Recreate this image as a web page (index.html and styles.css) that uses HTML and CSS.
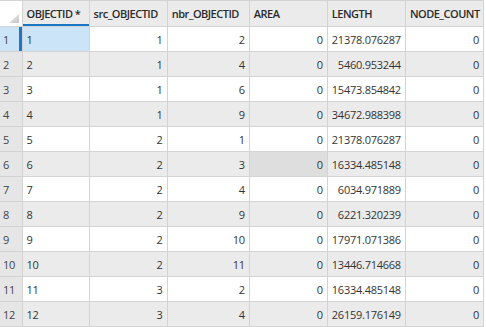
FILE: index.html
```html
<!DOCTYPE html>
<html>
<head>
<meta charset="utf-8">
<link rel="stylesheet" href="styles.css">
</head>
<body>
<table class="grid">
  <colgroup>
    <col class="c0"><col class="c1"><col class="c2"><col class="c3"><col class="c4"><col class="c5"><col class="c6">
  </colgroup>
  <thead>
    <tr>
      <th class="corner"><svg width="21" height="25" viewBox="0 0 21 25"><defs><linearGradient id="g" x1="0" y1="0" x2="1" y2="1"><stop offset="0" stop-color="#f2f2f2"/><stop offset="1" stop-color="#c4c4c4"/></linearGradient></defs><polygon points="19,13 19,22 9,22" fill="url(#g)"/></svg></th>
      <th class="sorted">OBJECTID *</th>
      <th>src_OBJECTID</th>
      <th>nbr_OBJECTID</th>
      <th>AREA</th>
      <th>LENGTH</th>
      <th>NODE_COUNT</th>
    </tr>
  </thead>
  <tbody>
    <tr class="sel"><td class="rh">1</td><td class="id">1</td><td>1</td><td>2</td><td>0</td><td>21378.076287</td><td>0</td></tr>
    <tr><td class="rh">2</td><td class="id">2</td><td>1</td><td>4</td><td>0</td><td>5460.953244</td><td>0</td></tr>
    <tr><td class="rh">3</td><td class="id">3</td><td>1</td><td>6</td><td>0</td><td>15473.854842</td><td>0</td></tr>
    <tr><td class="rh">4</td><td class="id">4</td><td>1</td><td>9</td><td>0</td><td>34672.988398</td><td>0</td></tr>
    <tr><td class="rh">5</td><td class="id">5</td><td>2</td><td>1</td><td>0</td><td>21378.076287</td><td>0</td></tr>
    <tr><td class="rh">6</td><td class="id">6</td><td>2</td><td>3</td><td class="hover">0</td><td>16334.485148</td><td>0</td></tr>
    <tr><td class="rh">7</td><td class="id">7</td><td>2</td><td>4</td><td>0</td><td>6034.971889</td><td>0</td></tr>
    <tr><td class="rh">8</td><td class="id">8</td><td>2</td><td>9</td><td>0</td><td>6221.320239</td><td>0</td></tr>
    <tr><td class="rh">9</td><td class="id">9</td><td>2</td><td>10</td><td>0</td><td>17971.071386</td><td>0</td></tr>
    <tr><td class="rh">10</td><td class="id">10</td><td>2</td><td>11</td><td>0</td><td>13446.714668</td><td>0</td></tr>
    <tr><td class="rh">11</td><td class="id">11</td><td>3</td><td>2</td><td>0</td><td>16334.485148</td><td>0</td></tr>
    <tr><td class="rh">12</td><td class="id">12</td><td>3</td><td>4</td><td>0</td><td>26159.176149</td><td>0</td></tr>
  </tbody>
</table>
</body>
</html>
```
FILE: styles.css
```css
html, body {
  margin: 0;
  padding: 0;
  background: #ffffff;
  overflow: hidden;
}
.grid {
  border-collapse: collapse;
  table-layout: fixed;
  width: 484px;
  font-family: "Open Sans", "Noto Sans", sans-serif;
  font-size: 11px;
  letter-spacing: -0.25px;
  color: #333333;
}
.c0 { width: 22px; }
.c1 { width: 67px; }
.c2 { width: 78px; }
.c3 { width: 82px; }
.c4 { width: 78px; }
.c5 { width: 78px; }
.c6 { width: 78px; }
.grid th, .grid td {
  border: 1px solid #d3d3d3;
  padding: 0 4px;
  white-space: nowrap;
  overflow: hidden;
}
.grid th:first-child, .grid td:first-child { border-left: none; }
.grid th {
  height: 25px;
  background: #ebebeb;
  font-weight: 600;
  text-align: left;
  color: #2b2b2b;
  letter-spacing: -0.5px;
}
.grid th.corner {
  padding: 0;
  vertical-align: top;
  background: #ffffff;
}
.grid th.corner svg { display: block; }
.grid th.sorted {
  box-shadow: inset 0 -2px 0 #1a78c8;
}
.grid td {
  height: 24px;
  text-align: right;
  padding-right: 4px;
}
.grid td.id, .grid td.rh { text-align: left; }
.grid td.rh {
  background: #e6e6e6;
  padding-left: 3px;
  padding-right: 0;
  color: #444444;
}
.grid tbody tr:nth-child(even) td { background: #ebebeb; }
.grid tbody tr:nth-child(even) td.rh { background: #e6e6e6; }
.grid td.hover { background: #dedede !important; }
.grid tr.sel td.rh {
  background: #cce4f7;
  box-shadow: inset -3px 0 0 #1a78c8;
}
.grid tr.sel td.id { background: #cce4f7; }
```
